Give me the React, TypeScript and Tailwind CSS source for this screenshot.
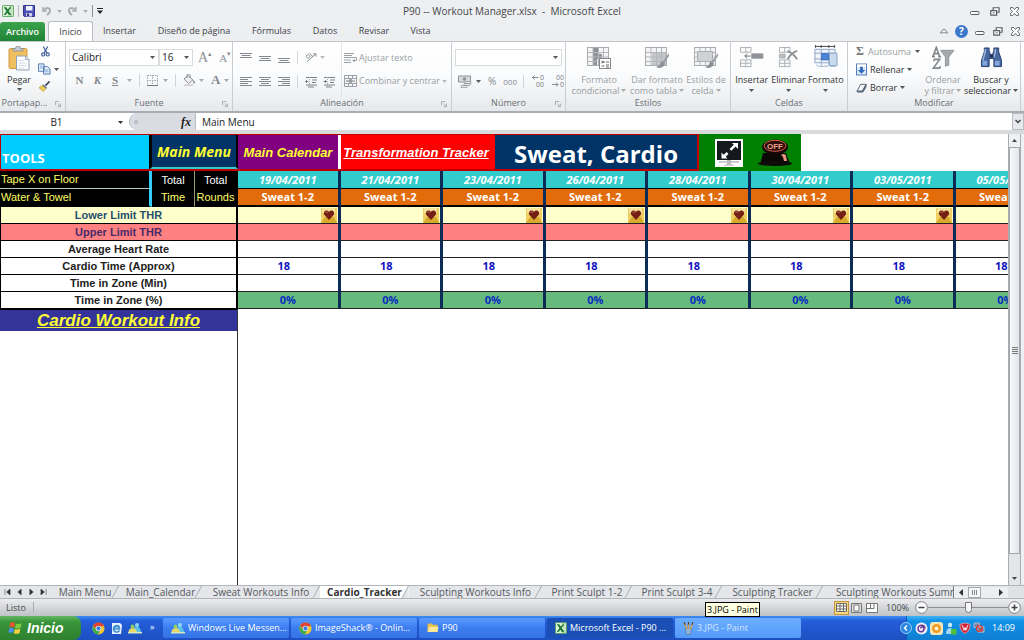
import type { ReactNode } from "react";
import { clsx } from "clsx";

const UI = "font-['Open_Sans','Noto_Sans',sans-serif]";
const ARIAL = "font-['Liberation_Sans',Arial,sans-serif]";

const MENU_TABS = [
  { label: "Inicio", width: "w-[45px]" },
  { label: "Insertar", width: "w-[53px]" },
  { label: "Diseño de página", width: "w-[96px]" },
  { label: "Fórmulas", width: "w-[59px]" },
  { label: "Datos", width: "w-[48px]" },
  { label: "Revisar", width: "w-[50px]" },
  { label: "Vista", width: "w-[43px]" },
];

const DATES = [
  "19/04/2011",
  "21/04/2011",
  "23/04/2011",
  "26/04/2011",
  "28/04/2011",
  "30/04/2011",
  "03/05/2011",
  "05/05/2011",
];

const SHEETS = [
  { label: "Main Menu", width: "w-[68px]" },
  { label: "Main_Calendar", width: "w-[83px]" },
  { label: "Sweat Workouts Info", width: "w-[118px]" },
  { label: "Cardio_Tracker", width: "w-[89px]", active: true },
  { label: "Sculpting Workouts Info", width: "w-[133px]" },
  { label: "Print Sculpt 1-2", width: "w-[90px]" },
  { label: "Print Sculpt 3-4", width: "w-[90px]" },
  { label: "Sculpting Tracker", width: "w-[101px]" },
];

function Caret({ className }: { className?: string }) {
  return (
    <svg viewBox="0 0 5 3" className={clsx("h-[3px] w-[5px] shrink-0", className ?? "text-[#555]")}>
      <path d="M0 0h5L2.5 3z" fill="currentColor" />
    </svg>
  );
}

function ExcelIcon({ className }: { className: string }) {
  return (
    <svg viewBox="0 0 14 14" className={className}>
      <rect x="0.5" y="0.5" width="13" height="13" rx="1" fill="#dff0da" stroke="#4c9a52" />
      <path d="M8 2h4.5M9 4.5h3.5M9 7h3.5M9 9.5h3.5M8 12h4.5" stroke="#9ccc97" />
      <path d="M2 2.5h3l1.7 2.8L9 2.5h2L7.7 7l3.3 4.8H8L6.300 8.900 4.200 11.800H2L5.200 7z" fill="#1c7a34" />
    </svg>
  );
}

function ChromeIcon() {
  return (
    <svg viewBox="0 0 14 14" className="size-[13px] shrink-0">
      <circle cx="7" cy="7" r="6.500" fill="#f4c430" />
      <path d="M1.200 4.200A6.500 6.500 0 0 1 13 4.500H7L4.500 7z" fill="#e0402f" />
      <path d="M1.200 4.200A6.500 6.500 0 0 0 6.500 13.500L9 8.500 5 8.500z" fill="#3faa4b" />
      <circle cx="7" cy="7" r="3" fill="#fff" />
      <circle cx="7" cy="7" r="2.300" fill="#3d7de0" />
    </svg>
  );
}

function MessengerIcon() {
  return (
    <svg viewBox="0 0 14 12" className="h-[12px] w-[14px] shrink-0">
      <path d="M6 7c0-2 1.500-2.500 3-2.500S12.500 6 13.500 11H6z" fill="#5cc0e8" />
      <circle cx="9" cy="3" r="2" fill="#8fd8f4" />
      <path d="M0.500 10c.5-3 2-4 4-4s3.500 1 4.500 4z" fill="#e9d76a" />
      <circle cx="4.500" cy="4.500" r="1.900" fill="#8fd05a" />
      <path d="M0 10h14v1.500H0z" fill="#d8e9c0" />
    </svg>
  );
}

function PaintIcon() {
  return (
    <svg viewBox="0 0 12 14" className="h-[13px] w-[11px] shrink-0">
      <path d="M2.500 7h7l-1 6.500h-5z" fill="#8fb3d8" stroke="#4a6a93" strokeWidth=".6" />
      <path d="M4 7.500L1.500 1M6 7.500V1M8 7.500L10.500 1.500" stroke="#d8a348" strokeWidth="1.500" />
      <path d="M1 0l1.500 3M6 0v2.500M11 0L9.500 3" stroke="#5a3a20" strokeWidth="1.200" />
    </svg>
  );
}

function WindowControls({ className }: { className: string }) {
  return (
    <div className={clsx("flex items-center text-[#555b63]", className)}>
      <button aria-label="Minimizar">
        <svg viewBox="0 0 10 4" className="mt-1 h-[4px] w-[10px]" fill="#fff" stroke="currentColor">
          <rect x=".5" y=".5" width="8.500" height="3" rx="1" />
        </svg>
      </button>
      <button aria-label="Restaurar">
        <svg viewBox="0 0 11 10" className="h-[9px] w-[10px]" fill="#fff" stroke="currentColor">
          <path d="M3.500 .8h6.500v5H3.500z" strokeWidth="1.300" />
          <path d="M.8 4h6.500v5H.8z" strokeWidth="1.300" />
          <path d="M2.800 6.500h2.500" />
        </svg>
      </button>
      <button aria-label="Cerrar">
        <svg viewBox="0 0 10 10" className="size-[9px]" fill="#fff" stroke="currentColor">
          <path d="M.6.6h2.600L5 2.800 6.800.6h2.600v2L7.300 5l2.100 2.400v2H6.800L5 7.200 3.200 9.400H.6v-2L2.700 5 .6 2.600z" />
        </svg>
      </button>
    </div>
  );
}

function TitleBar() {
  return (
    <header className="relative flex h-[22px] shrink-0 items-center justify-between pr-[5px] pl-[2px]">
      <div className="flex h-[17px] items-center">
        <ExcelIcon className="size-[12px]" />
        <span className="mx-1 h-3 w-px bg-[#b9bdc3]" />
        <button aria-label="Guardar">
          <svg viewBox="0 0 12 12" className="size-[12px]">
            <path d="M.5.5h11v11h-10l-1-1z" fill="#4d50b8" stroke="#34368c" />
            <path d="M3 1h6.500v4.500H3z" fill="#f1f3ff" />
            <path d="M3 8h6v3.500H3z" fill="#c9cdea" />
            <path d="M4 8.500h2v2.500H4z" fill="#34368c" />
          </svg>
        </button>
        <button aria-label="Deshacer" className="ml-[6px] flex items-center gap-[5px] text-[#a9adb3]">
          <svg viewBox="0 0 11 10" className="h-[10px] w-[11px]" fill="none" stroke="currentColor" strokeWidth="2">
            <path d="M2 1v4h4" strokeWidth="1.500" />
            <path d="M2.500 4.500C5 1 9.500 1.500 9 5c-.3 2-1.500 3-3 4" />
          </svg>
          <Caret className="text-[#a9adb3]" />
        </button>
        <button aria-label="Rehacer" className="ml-[5px] flex items-center gap-[5px] text-[#a9adb3]">
          <svg viewBox="0 0 11 10" className="h-[10px] w-[11px]" fill="none" stroke="currentColor" strokeWidth="2">
            <path d="M9 1v4H5" strokeWidth="1.500" />
            <path d="M8.500 4.500C6 1 1.500 1.500 2 5c.3 2 1.500 3 3 4" />
          </svg>
          <Caret className="text-[#a9adb3]" />
        </button>
        <span className="mx-1 h-3 w-px bg-[#8b9097]" />
        <button aria-label="Personalizar barra">
          <svg viewBox="0 0 6 6" className="size-[6px]">
            <path d="M0 .5h6" stroke="#222" />
            <path d="M0 2.500h6L3 6z" fill="#222" />
          </svg>
        </button>
      </div>
      <h1 className="absolute inset-x-0 text-center text-[10px] leading-[14px] whitespace-pre text-[#44474c]">
        P90 -- Workout Manager.xlsx  -  Microsoft Excel
      </h1>
      <WindowControls className="gap-[10px]" />
    </header>
  );
}

function MenuBar() {
  return (
    <nav className="flex h-[20px] shrink-0 items-end border-b border-[#c3c7cc] text-[9px] leading-[18px] text-[#3d4147]">
      <button className="h-[19px] w-[45px] rounded-t-[3px] bg-linear-to-b from-[#3ba44b] to-[#1f8236] font-semibold text-white">
        Archivo
      </button>
      <div className="ml-[3px] flex">
        {MENU_TABS.map((tab, i) => (
          <button
            key={tab.label}
            className={clsx(
              "h-[20px] whitespace-nowrap",
              tab.width,
              i === 0 && "-mb-px rounded-t-[3px] border border-b-0 border-[#b9bdc3] bg-white",
            )}
          >
            {tab.label}
          </button>
        ))}
      </div>
      <div className="ml-auto flex h-[20px] items-center gap-[7px] pr-[4px]">
        <button aria-label="Minimizar la cinta">
          <svg viewBox="0 0 9 6" className="h-[6px] w-[8px]" fill="#fff" stroke="#666">
            <path d="M.8 5.200V4L4.500.8 8.200 4v1.200H6L4.500 4 3 5.200z" />
          </svg>
        </button>
        <button
          aria-label="Ayuda"
          className="size-[13px] rounded-full bg-[#3b78cc] text-[10px] leading-[13px] font-bold text-white"
        >
          ?
        </button>
        <WindowControls className="gap-[8px]" />
      </div>
    </nav>
  );
}

function Group({
  label,
  className,
  launcher,
  children,
}: {
  label: string;
  className: string;
  launcher?: boolean;
  children: ReactNode;
}) {
  return (
    <section className={clsx("flex h-full shrink-0 flex-col border-r border-[#c9ccd1]", className)}>
      <div className="flex h-[55px] min-w-0">{children}</div>
      <div className="relative h-[12px] text-center text-[9px] leading-[12px] text-[#6a6e74]">
        {label}
        {launcher && (
          <svg viewBox="0 0 7 7" className="absolute right-[4px] bottom-[2px] size-[6px]" fill="none" stroke="#a0a4aa">
            <path d="M.5 5V.5H5M3 3l3 3M6.500 3v3.500H3" />
          </svg>
        )}
      </div>
    </section>
  );
}

function Divider() {
  return <span className="h-[13px] w-px bg-[#d2d5d9]" />;
}

function Combo({ label, value, className }: { label: string; value: string; className: string }) {
  return (
    <div className={clsx("relative h-[17px]", className)}>
      <select
        aria-label={label}
        className="block h-full w-full appearance-none border border-[#d9dcdf] bg-white pl-[2px] text-[10px] leading-[15px] text-[#222]"
      >
        <option>{value}</option>
      </select>
      <Caret className="pointer-events-none absolute top-[7px] right-[4px] text-[#555]" />
    </div>
  );
}

function Clipboard() {
  return (
    <Group label="Portapap..." className="w-[66px] [&>div:last-child]:pr-[16px]" launcher>
      <button className="flex w-[38px] flex-col items-center pt-[4px] text-[9px] leading-[12px] text-[#333]">
        <svg viewBox="0 0 22 25" className="h-[25px] w-[22px]">
          <rect x="1" y="2.500" width="18" height="20" rx="1.500" fill="#f0c060" stroke="#cf9a3c" />
          <path d="M5 5V2.500h2.500a2.500 2.500 0 0 1 5 0H15V5z" fill="#c5c9cf" stroke="#84898f" strokeWidth=".8" />
          <path d="M8.500 10h9l3.500 3.500V24H8.500z" fill="#fff" stroke="#8aa0bd" />
          <path d="M17.500 10v3.500H21" fill="#dde6f0" stroke="#8aa0bd" strokeWidth=".8" />
          <path d="M10.500 14.500h6M10.500 17h8M10.500 19.500h8M10.500 22h6" stroke="#c4d0df" strokeWidth=".8" />
        </svg>
        <span className="mt-[3px] mb-[2px]">Pegar</span>
        <Caret />
      </button>
      <div className="flex flex-col gap-[6px] pt-[4px]">
        <button aria-label="Cortar" className="ml-[3px]">
          <svg viewBox="0 0 10 12" className="h-[11px] w-[9px]" fill="none" stroke="#3c5c96" strokeWidth="1.300">
            <path d="M2.500.5L6.500 7.500M7.500.5L3.500 7.500" />
            <circle cx="2.500" cy="9.300" r="1.700" />
            <circle cx="7.500" cy="9.300" r="1.700" />
          </svg>
        </button>
        <button aria-label="Copiar" className="flex items-center gap-[3px]">
          <svg viewBox="0 0 14 12" className="h-[12px] w-[13px]" fill="#e9f1fc" stroke="#4c74ad">
            <path d="M.5.5h6v8h-6zM6 3.500h4.500l2.500 2.500v5.500H6z" />
            <path d="M2 3h3M2 5h3M7.500 7h4M7.500 9h4" stroke="#7fa3d4" />
          </svg>
          <Caret />
        </button>
        <button aria-label="Copiar formato">
          <svg viewBox="0 0 13 12" className="h-[11px] w-[13px]">
            <path d="M12 .5L7.500 5" stroke="#3f4a66" strokeWidth="2" />
            <path d="M5 3.500l4.500 4-1.500 1-4-3.500z" fill="#6c7688" />
            <path d="M3.800 4.800L.5 7.500c1.500.5 2.500 2 4.500 4L8 8.500z" fill="#f1cd55" stroke="#b08c2c" strokeWidth=".6" />
          </svg>
        </button>
      </div>
    </Group>
  );
}

function FontGroup() {
  return (
    <Group label="Fuente" className="w-[167px]" launcher>
      <div className="flex flex-col pt-[7px] pl-[3px]">
        <div className="flex items-center">
          <Combo label="Fuente" value="Calibri" className="w-[90px]" />
          <Combo label="Tamaño" value="16" className="w-[34px]" />
          <div className="ml-[5px] flex items-end gap-[7px] font-['Liberation_Serif',serif] leading-[14px] text-[#8c9096]">
            <button aria-label="Aumentar tamaño" className="flex items-start text-[14px]">
              A<span className="text-[7px] leading-[7px]">▴</span>
            </button>
            <button aria-label="Disminuir tamaño" className="flex items-start text-[11px]">
              A<span className="text-[7px] leading-[7px]">▾</span>
            </button>
          </div>
        </div>
        <div className="mt-[7px] flex items-center gap-[7px] pl-[5px] font-['Liberation_Serif',serif] text-[11px] leading-[14px] text-[#85898f]">
          <button className="w-[11px] font-bold">N</button>
          <button className="w-[11px] font-bold italic">K</button>
          <button className="w-[10px] font-bold underline">S</button>
          <Caret className="text-[#aaa]" />
          <Divider />
          <button aria-label="Bordes" className="flex items-center gap-[5px]">
            <svg viewBox="0 0 11 11" className="size-[11px]" fill="none" stroke="#a4a8ad">
              <path d="M.5.5h10v10M5.500 0v11M0 5.500h11M.5 0v11" strokeDasharray="1.500 1" />
              <path d="M0 10.500h11" stroke="#777" />
            </svg>
            <Caret className="text-[#aaa]" />
          </button>
          <Divider />
          <button aria-label="Color de relleno" className="flex items-center gap-[3px]">
            <svg viewBox="0 0 13 12" className="h-[12px] w-[13px]">
              <path d="M5 1.500L10 6 5.500 9.500 1 5z" fill="#eee" stroke="#8d9197" />
              <path d="M4 4V1.500a1.500 1.500 0 0 1 3 0V4" fill="none" stroke="#8d9197" />
              <path d="M10.500 6c1.500 1.500 2 2.500 1 3.500s-1.800-.8-1-3.500z" fill="#8d9197" />
              <path d="M1 10.500h9v1.500H1z" fill="#ccc" />
            </svg>
            <Caret className="text-[#aaa]" />
          </button>
          <button aria-label="Color de fuente" className="flex items-center gap-[4px] text-[13px] font-bold">
            A
            <Caret className="text-[#aaa]" />
          </button>
        </div>
      </div>
    </Group>
  );
}

function LinesIcon({ d }: { d: string }) {
  return (
    <svg viewBox="0 0 12 12" className="size-[12px]" stroke="#85898f">
      <path d={d} />
    </svg>
  );
}

function IndentIcon({ flip }: { flip?: boolean }) {
  return (
    <svg viewBox="0 0 13 12" className="h-[12px] w-[13px]" fill="none" stroke="#7d8187">
      <path d="M1 1.500h11M7 4h5M7 6.500h4M1 9h11M3 11h6" />
      <path d="M4.500 1v10" stroke="#aaa" strokeDasharray="1 1" />
      <path d={flip ? "M.5 5.500h3M2 4l1.500 1.500L2 7" : "M3.500 5.500h-3M2 4L.5 5.500 2 7"} />
    </svg>
  );
}

function Alignment() {
  return (
    <Group label="Alineación" className="w-[219px]" launcher>
      <div className="flex w-[109px] flex-col gap-[11px] border-r border-[#e1e3e6] pt-[9px] pl-[7px]">
        <div className="flex items-center gap-[7px]">
          <button aria-label="Alinear arriba"><LinesIcon d="M0 1.500h12M1.500 3.500h9M0 5.500h12" /></button>
          <button aria-label="Alinear en medio"><LinesIcon d="M0 4.500h12M1.500 6.500h9M0 8.500h12" /></button>
          <button aria-label="Alinear abajo"><LinesIcon d="M0 6.500h12M1.500 8.500h9M0 10.500h12" /></button>
          <Divider />
          <button aria-label="Orientación" className="flex items-center gap-[3px]">
            <svg viewBox="0 0 13 12" className="h-[11px] w-[12px]" fill="none" stroke="#8b8f95">
              <path d="M2 10.500L12 2M9 1.800h3V5" />
              <path d="M1 4.500l2.500-2 2 2.500-2.500 2zM5 1l3 4 2-1.500" />
            </svg>
            <Caret className="text-[#bbb]" />
          </button>
        </div>
        <div className="flex items-center gap-[7px]">
          <button aria-label="Izquierda"><LinesIcon d="M0 1.500h12M0 3.500h8M0 5.500h12M0 7.500h8M0 9.500h12" /></button>
          <button aria-label="Centro"><LinesIcon d="M0 1.500h12M2 3.500h8M0 5.500h12M2 7.500h8M0 9.500h12" /></button>
          <button aria-label="Derecha"><LinesIcon d="M0 1.500h12M4 3.500h8M0 5.500h12M4 7.500h8M0 9.500h12" /></button>
          <Divider />
          <div className="flex gap-[5px]">
            <button aria-label="Disminuir sangría"><IndentIcon /></button>
            <button aria-label="Aumentar sangría"><IndentIcon flip /></button>
          </div>
        </div>
      </div>
      <div className="flex flex-col gap-[11px] pt-[10px] pl-[2px] text-[9px] leading-[12px] text-[#9a9da2]">
        <button className="flex items-center gap-[2px] whitespace-nowrap">
          <svg viewBox="0 0 13 12" className="h-[12px] w-[13px]" fill="none" stroke="#9ca0a5">
            <path d="M0 1.500h10M0 3.500h8M0 5.500h12.500v3H9M0 8h7M0 10.500h7" />
            <path d="M10.500 7L9 8.500l1.500 1.500" />
          </svg>
          Ajustar texto
        </button>
        <button className="flex items-center gap-[2px] whitespace-nowrap">
          <svg viewBox="0 0 13 12" className="h-[12px] w-[13px]" fill="none" stroke="#9ca0a5">
            <path d="M.5.5h12v11H.5zM.5 3.500h12M.5 8.500h12M4.500.5v3M8.500.5v3M4.500 8.500v3M8.500 8.500v3" />
            <path d="M2 6h3M11 6H8" stroke="#777" />
            <path d="M5.500 4.500h2v3h-2z" fill="#999" />
          </svg>
          Combinar y centrar
          <Caret className="text-[#bbb]" />
        </button>
      </div>
    </Group>
  );
}

function DecimalIcon({ top, bottom, arrow }: { top: string; bottom: string; arrow: string }) {
  return (
    <svg viewBox="0 0 13 14" className="h-[14px] w-[13px]" fill="none" stroke="#85898f">
      <path d={arrow} />
      <text x="13" y="6" textAnchor="end" fontSize="7" fill="#777b81" stroke="none">
        {top}
      </text>
      <text x="13" y="13" textAnchor="end" fontSize="7" fill="#777b81" stroke="none">
        {bottom}
      </text>
    </svg>
  );
}

function NumberGroup() {
  return (
    <Group label="Número" className="w-[114px]" launcher>
      <div className="flex flex-col pt-[7px] pl-[3px]">
        <Combo label="Formato de número" value="" className="w-[107px]" />
        <div className="mt-[8px] flex items-center gap-[7px] pl-[3px] text-[9px] leading-[13px] text-[#85898f]">
          <button aria-label="Moneda" className="flex items-center gap-[4px]">
            <svg viewBox="0 0 14 13" className="h-[13px] w-[14px]">
              <path d="M.5 1h12v6H.5z" fill="#d8dadd" stroke="#8e9298" />
              <circle cx="6.500" cy="4" r="1.800" fill="#8e9298" />
              <path d="M7 6.500h6v2H7zM6 8.500h6v2H6zM3 10.500h6v2H3z" fill="#ececee" stroke="#8e9298" strokeWidth=".7" />
            </svg>
            <Caret />
          </button>
          <button className="text-[10px]">%</button>
          <button className="-mr-px text-[8px]">000</button>
          <Divider />
          <button aria-label="Aumentar decimales">
            <DecimalIcon top="0" bottom="00" arrow="M7.500 3.500h-6M3.500 1.500l-2 2 2 2" />
          </button>
          <button aria-label="Disminuir decimales">
            <DecimalIcon top="00" bottom="0" arrow="M1 10.500h6M5 8.500l2 2-2 2" />
          </button>
        </div>
      </div>
    </Group>
  );
}

function BigButton({
  icon,
  lines,
  className,
  disabled,
}: {
  icon: ReactNode;
  lines: string[];
  className: string;
  disabled?: boolean;
}) {
  return (
    <button
      className={clsx(
        "flex flex-col items-center pt-[3px] text-[9px] leading-[11px] whitespace-nowrap",
        disabled ? "text-[#9a9da2]" : "text-[#333]",
        className,
      )}
    >
      <span className="mb-[4px] flex h-[25px] items-center">{icon}</span>
      <span>{lines[0]}</span>
      <span className="flex h-[11px] items-center gap-[2px]">
        {lines[1]}
        <Caret className={disabled ? "text-[#aaa]" : "text-[#555]"} />
      </span>
    </button>
  );
}

function TableIcon({ kind }: { kind: "conditional" | "brush" | "cell" }) {
  return (
    <svg viewBox="0 0 26 25" className="h-[25px] w-[26px]">
      <rect x="1.500" y="2.500" width="21" height="18" fill="#f4f4f5" stroke="#a9acb0" />
      {kind === "conditional" && <path d="M7 3h6v6H7zM7 9h9v5H7zM7 14h4v6H7z" fill="#8f9297" />}
      {kind === "brush" && <path d="M8 7h14v13H8z" fill="#c3c5c9" />}
      <path d="M2 7.500h20M2 12h20M2 16.500h20M7 3v17M12.500 3v17M17.500 3v17" stroke="#b4b7bb" />
      {kind === "cell" && <path d="M4.500 6.500h15v10h-15z" fill="#cfd1d4" stroke="#a9acb0" />}
      {kind === "conditional" ? (
        <>
          <rect x="13.500" y="13.500" width="11" height="10" fill="#fff" stroke="#85888d" />
          <path d="M15.500 16l3 1-3 1M20 17h3M15.500 21h3M20 20h3M20 22h3" fill="none" stroke="#666" />
        </>
      ) : (
        <>
          <path d="M25 8l-6.500 9 1.500 1L25 11z" fill="#999ca1" />
          <path d="M18.500 16.500c-2 0-2 2-3 3.500-1 1-2 1.500-3.500 2 4 2 8 .5 9-3.500z" fill="#8d9095" />
        </>
      )}
    </svg>
  );
}

function Styles() {
  return (
    <Group label="Estilos" className="w-[165px]">
      <BigButton disabled className="w-[66px]" icon={<TableIcon kind="conditional" />} lines={["Formato", "condicional"]} />
      <BigButton disabled className="w-[50px]" icon={<TableIcon kind="brush" />} lines={["Dar formato", "como tabla"]} />
      <BigButton disabled className="w-[48px]" icon={<TableIcon kind="cell" />} lines={["Estilos de", "celda"]} />
    </Group>
  );
}

function Cells() {
  return (
    <Group label="Celdas" className="w-[117px]">
      <BigButton
        className="w-[42px]"
        lines={["Insertar"]}
        icon={
          <svg viewBox="0 0 26 24" className="h-[23px] w-[25px]" fill="#fbfbfb" stroke="#aaadb2">
            <path d="M1.500 1.500h11v5h-11zM7 1.500v5M1.500 14.500h11v7h-11zM7 14.500v7M1.500 18h11" />
            <path d="M13 8h12v5H13z" fill="#8e9196" />
            <path d="M12 10.500H6M8.500 8L6 10.500 8.500 13" fill="none" stroke="#666" />
          </svg>
        }
      />
      <BigButton
        className="w-[32px]"
        lines={["Eliminar"]}
        icon={
          <svg viewBox="0 0 24 24" className="h-[23px] w-[23px]" fill="#fbfbfb" stroke="#aaadb2">
            <path d="M2.500 1.500h11v5h-11zM8 1.500v5M2.500 14.500h11v7h-11zM8 14.500v7M2.500 18h11" />
            <path d="M2.500 8.500h6v4h-6z" fill="#bbb" />
            <path d="M11 5c4 2 8 5 10 9M21 5c-4 1.500-8 5-10 9" fill="none" stroke="#8e9196" strokeWidth="2" />
          </svg>
        }
      />
      <BigButton
        className="w-[43px]"
        lines={["Formato"]}
        icon={
          <svg viewBox="0 0 26 26" className="h-[25px] w-[26px]" fill="#f1f5fb" stroke="#8ba4c6">
            <path d="M1.500 4.500h21v14h-21zM1.500 8.500h21M1.500 14.500h21M8 4.500v17M16 4.500v17" />
            <path d="M16.500 8.500h8v13h-8z" fill="#c9d9ee" />
            <path d="M8.500 9h7v6.500h-7z" fill="#4b86da" stroke="#3b6fb8" />
            <path d="M3 20.500c4 4 8 0 12 2M17 22h6" fill="none" />
            <path d="M2 1.500h20M2 0v3M8 0v3M16 0v3M22 0v3" stroke="#444" />
          </svg>
        }
      />
    </Group>
  );
}

function Editing() {
  return (
    <Group label="Modificar" className="w-[173px]">
      <div className="flex w-[72px] flex-col gap-[5px] pt-[3px] pl-[8px] text-[9px] leading-[13px] text-[#333]">
        <button className="flex items-center gap-[4px] text-[#9a9da2]">
          <span className="w-[10px] font-['Liberation_Serif',serif] text-[12px] font-bold text-[#777]">Σ</span>
          Autosuma
          <Caret />
        </button>
        <button className="flex items-center gap-[3px]">
          <svg viewBox="0 0 12 13" className="h-[13px] w-[11px]">
            <rect x=".5" y=".5" width="11" height="12" fill="#dbe8f8" stroke="#4b73ae" />
            <path d="M1 1h10v3H1z" fill="#fff" />
            <path d="M4.500 3.500h3V7H10l-4 4-4-4h2.500z" fill="#2f66bd" />
          </svg>
          Rellenar
          <Caret />
        </button>
        <button className="flex items-center gap-[3px]">
          <svg viewBox="0 0 12 11" className="h-[10px] w-[11px]" stroke="#555f72">
            <path d="M5 1.500h6L7 9H1z" fill="#f6f8fc" />
            <path d="M11 1.500v3L7.500 10H1.500L1 9h6z" fill="#6c7b94" />
          </svg>
          Borrar
          <Caret />
        </button>
      </div>
      <BigButton
        disabled
        className="w-[46px]"
        lines={["Ordenar", "y filtrar"]}
        icon={
          <svg viewBox="0 0 26 25" className="h-[24px] w-[25px]" fill="none" stroke="#83868b" strokeWidth="1.700">
            <path d="M10 4.500h14l-5.500 7V20l-3.500 1v-9.500z" fill="#a6a9ad" stroke="#929599" strokeWidth="1" />
            <path d="M2 11L5.500 1.500 9 11M3.500 8h4M1 11h3M7.500 11h3" />
            <path d="M3 14h6L2.500 23H9.500M3 14v2M9.500 21v2" />
          </svg>
        }
      />
      <BigButton
        className="w-[50px]"
        lines={["Buscar y", "seleccionar"]}
        icon={
          <svg viewBox="0 0 24 22" className="h-[21px] w-[23px]">
            <path d="M4.500 1h5v3l1.500 4h2l1.500-4V1h5v4l3 9v6.500h-8V12h-5v8.500h-8V14l3-9z" fill="#47679f" stroke="#263f70" />
            <path d="M5.500 2v3L3 14M16 2v3l-1.500 6" fill="none" stroke="#9db9e4" strokeWidth="1.500" />
            <path d="M2.500 14.500h5v5h-5zM15.500 14.500h5v5h-5z" fill="#85a7dc" />
            <path d="M10 8h4v3h-4z" fill="#1f3158" />
          </svg>
        }
      />
    </Group>
  );
}

function FormulaBar() {
  return (
    <div className="flex h-[23px] shrink-0 items-center border-t-2 border-b-4 border-t-[#a9adb3] border-b-[#d9dadc] bg-white text-[10px] text-[#222]">
      <div className="relative w-[129px]">
        <input aria-label="Cuadro de nombres" defaultValue="B1" className="block h-[16px] w-full pr-[16px] text-center leading-[16px]" />
        <Caret className="absolute top-[7px] right-[6px] text-[#333]" />
      </div>
      <div className="flex h-full w-[67px] items-center justify-between rounded-l-full border-r border-l border-[#b9bdc3] bg-[#d9dde3] pr-[4px] pl-[4px]">
        <span className="size-[4px] rounded-full border border-[#a9adb3]" />
        <button className="font-['Liberation_Serif',serif] text-[12px] leading-[14px] font-bold italic">fx</button>
      </div>
      <input aria-label="Barra de fórmulas" defaultValue="Main Menu" className="h-full min-w-0 flex-1 pl-[6px] leading-[16px]" />
      <button aria-label="Expandir" className="flex h-full w-[12px] items-center justify-center border border-[#b9bdc3] bg-[#e6e8eb]">
        <svg viewBox="0 0 6 5" className="h-[5px] w-[6px]" fill="none" stroke="#444" strokeWidth="1.500">
          <path d="M.5 1L3 3.500 5.500 1" />
        </svg>
      </button>
    </div>
  );
}

function HeartIcon() {
  return (
    <svg viewBox="0 0 16 15" className="h-[15px] w-[16px]">
      <rect width="16" height="15" fill="#f0cf62" />
      <path d="M0 15L4 9h9l3 6z" fill="#d9a92e" />
      <path d="M1 0h13v5H1z" fill="#f8e49a" />
      <path d="M8 12L3 6.500C2 3 5.500.8 8 3.800c2.500-3 6-.8 5 2.700z" fill="#742016" />
      <path d="M4.500 4.500c.8-1 2-.6 2.500.4" fill="none" stroke="#c8765c" />
    </svg>
  );
}

function SheetHeader() {
  return (
    <div className="flex h-[37px] w-[801px] text-center leading-[18px] whitespace-nowrap">
      <div className="flex w-[699px] border-y border-b-2 border-[#c00000]">
        <div className="w-[150px] border-r border-l border-black border-l-[#c00000] bg-[#00ccff] pt-[14px] pl-px text-left text-[13px] font-bold text-white">
          TOOLS
        </div>
        <a
          href="#main-menu"
          className="w-[88px] border-x-2 border-b-2 border-x-black border-b-[#33cccc] bg-[#003366] pt-[8px] text-[14px] font-bold text-[#ffff33] italic"
        >
          Main Menu
        </a>
        <a
          href="#main-calendar"
          className={clsx("w-[103px] border-r-3 border-white bg-[#800080] pt-[9px] text-[13px] font-bold text-[#ffff33] italic", ARIAL)}
        >
          Main Calendar
        </a>
        <a
          href="#transformation-tracker"
          className={clsx("w-[154px] bg-[#ff0000] pt-[9px] pr-[4px] text-[13px] font-bold text-white italic underline", ARIAL)}
        >
          Transformation Tracker
        </a>
        <div className="flex-1 border-r-2 border-[#c00000] bg-[#003366] text-[24px] leading-[37px] font-bold text-white">
          Sweat, Cardio
        </div>
      </div>
      <div className="flex flex-1 items-center justify-end gap-[14px] bg-[#008000] pr-[8px]">
        <button aria-label="Pantalla completa">
          <svg viewBox="0 0 28 28" className="size-[28px]">
            <rect width="28" height="28" fill="#fff" />
            <path d="M2 2h24v19H2z" fill="#15181c" />
            <path d="M4 22.500h20v1H4zM8 26.500c1-1.500 11-1.500 12 0z" fill="#999" />
            <path d="M12 21h4v4.500h-4z" fill="#bbb" />
            <path d="M23 4h-6l1.800 1.800-4.300 4.200 1.800 1.800 4.300-4.200L23 10zM6.500 19.500h6l-1.800-1.800 2.800-2.800-1.800-1.800-3 2.700L6.500 13.500z" fill="#fff" />
          </svg>
        </button>
        <button aria-label="Apagar">
          <svg viewBox="0 0 36 28" className="h-[28px] w-[36px]">
            <path d="M6 14h23l3.500 10h-29z" fill="#0c0806" />
            <ellipse cx="18" cy="24.500" rx="17" ry="2.500" fill="#100c0a" />
            <ellipse cx="18" cy="8" rx="13" ry="7.500" fill="#160806" />
            <ellipse cx="18" cy="6.800" rx="11" ry="5.500" fill="#2c0d09" stroke="#d8604a" />
            <text x="18" y="9.500" textAnchor="middle" fontSize="8" fontWeight="700" fill="#f3a18c" fontFamily="Liberation Sans">
              OFF
            </text>
            <path d="M24 16c2-2 5-1 5 1l1 5h-3l-1-4z" fill="#e8957c" />
          </svg>
        </button>
      </div>
    </div>
  );
}

function DataRow({
  label,
  labelClass,
  cellClass,
  render,
}: {
  label: string;
  labelClass?: string;
  cellClass?: string;
  render?: () => ReactNode;
}) {
  return (
    <tr className="h-[17px]">
      <th
        colSpan={3}
        className={clsx(
          "border-r-2 border-b border-l border-black p-0 text-[11px] leading-[16px] font-bold",
          ARIAL,
          labelClass ?? "text-[#222]",
        )}
      >
        {label}
      </th>
      {DATES.map((date) => (
        <td
          key={date}
          className={clsx("border-r-3 border-b border-r-[#0b2c56] border-b-[#222] text-[11px] leading-[16px] font-bold", cellClass ?? "p-0")}
        >
          {render?.()}
        </td>
      ))}
    </tr>
  );
}

function Tracker() {
  return (
    <table className="w-[1058px] table-fixed border-separate border-spacing-0 text-center whitespace-nowrap">
      <colgroup>
        <col className="w-[152px]" />
        <col className="w-[43px]" />
        <col className="w-[43px]" />
        {DATES.map((date) => (
          <col key={date} />
        ))}
      </colgroup>
      <thead className="text-[11px] leading-[17px]">
        <tr className={clsx("h-[18px] text-[#ffff66]", ARIAL)}>
          <th className="border-r-3 border-b border-r-[#33ccff] border-b-[#a8c8c8] bg-black p-0 pl-px text-left font-normal">
            Tape X on Floor
          </th>
          <th className="border-r border-[#999966] bg-black p-0 font-normal text-white">Total</th>
          <th className="border-r-2 border-black bg-black p-0 font-normal text-white">Total</th>
          {DATES.map((date) => (
            <th
              key={date}
              className={clsx("border-r-3 border-b border-r-[#0b2c56] border-b-black bg-[#33cccc] p-0 font-bold text-white italic", UI)}
            >
              {date}
            </th>
          ))}
        </tr>
        <tr className={clsx("h-[18px] text-[#ffff66]", ARIAL)}>
          <th className="border-r-3 border-b border-r-[#33ccff] border-b-black bg-black p-0 pl-px text-left font-normal">
            Water &amp; Towel
          </th>
          <th className="border-r border-b border-r-[#999966] border-b-black bg-black p-0 font-normal">Time</th>
          <th className="border-r-2 border-b border-black bg-black p-0 font-normal">Rounds</th>
          {DATES.map((date) => (
            <th
              key={date}
              className={clsx("border-r-3 border-b-2 border-r-[#0b2c56] border-b-black bg-[#e26b0a] p-0 leading-[16px] font-bold text-white", UI)}
            >
              Sweat 1-2
            </th>
          ))}
        </tr>
      </thead>
      <tbody>
        <DataRow
          label="Lower Limit THR"
          labelClass="bg-[#ffffcc] text-[#24506e]"
          cellClass="bg-[#ffffcc] p-0"
          render={() => (
            <div className="flex h-[16px] items-center justify-end pr-px">
              <HeartIcon />
            </div>
          )}
        />
        <DataRow label="Upper Limit THR" labelClass="bg-[#ff8080] text-[#4a2a6a]" cellClass="bg-[#ff8080] p-0" />
        <DataRow label="Average Heart Rate" />
        <DataRow label="Cardio Time (Approx)" cellClass="py-0 pr-[8px] pl-0 text-[#1010c0]" render={() => "18"} />
        <DataRow label="Time in Zone (Min)" />
        <DataRow label="Time in Zone (%)" cellClass="bg-[#66bb7c] p-0 text-[#0a2cc0]" render={() => "0%"} />
      </tbody>
    </table>
  );
}

function Worksheet() {
  return (
    <div className="flex min-h-0 flex-1 bg-white">
      <main className="flex min-w-0 flex-1 flex-col overflow-hidden">
        <SheetHeader />
        <Tracker />
        <div className="w-[238px] flex-1 border-r border-[#333]">
          <h2
            className={clsx(
              "h-[22px] border-t border-black bg-[#333399] text-center text-[17px] leading-[21px] font-bold text-[#ffff33] italic underline",
              ARIAL,
            )}
          >
            Cardio Workout Info
          </h2>
        </div>
      </main>
      <div className="flex w-[16px] shrink-0 bg-[#eef0f3] pr-[3px]">
        <div className="flex flex-1 flex-col border-x border-[#a9adb3] bg-[#e3e5e9]">
          <button aria-label="Subir" className="flex h-[13px] items-center justify-center bg-[#eff0f2]">
            <Caret className="rotate-180 text-[#444]" />
          </button>
          <div className="mb-[18px] flex flex-1 items-center justify-center border border-[#a4a8ae] bg-linear-to-r from-[#f8f9fa] to-[#e1e4e8]">
            <svg viewBox="0 0 6 7" className="h-[7px] w-[6px]" stroke="#777">
              <path d="M0 .5h6M0 2.500h6M0 4.500h6M0 6.500h6" />
            </svg>
          </div>
          <button aria-label="Bajar" className="flex h-[13px] items-center justify-center">
            <Caret className="text-[#444]" />
          </button>
        </div>
      </div>
    </div>
  );
}

function ScrollArrow({ label, d }: { label: string; d: string }) {
  return (
    <button aria-label={label}>
      <svg viewBox="0 0 4 7" className="h-[7px] w-[4px]" fill="#333">
        <path d={d} />
      </svg>
    </button>
  );
}

function SheetTabs() {
  return (
    <div className="flex h-[14px] shrink-0 items-center border-t border-b border-[#b1b4b9] bg-[#e4e6e9] text-[10px] leading-[12px] text-[#55585d]">
      <div className="flex w-[51px] items-center justify-around px-[2px]">
        {["M1 0v7M7 0L3 3.500 7 7z", "M6 0L2 3.500 6 7z", "M2 0l4 3.500L2 7z", "M7 0v7M1 0l4 3.500L1 7z"].map((d) => (
          <button key={d} aria-label="Desplazar hojas">
            <svg viewBox="0 0 8 7" className="h-[6px] w-[7px]" fill="#333" stroke="#333" strokeWidth=".6">
              <path d={d} />
            </svg>
          </button>
        ))}
      </div>
      <div className="flex min-w-0 flex-1 overflow-hidden border-r border-[#777] whitespace-nowrap">
        {SHEETS.map((sheet) => (
          <button
            key={sheet.label}
            className={clsx(
              "relative h-[12px] shrink-0",
              sheet.width,
              sheet.active && "bg-white font-bold text-[#333]",
            )}
          >
            {sheet.label}
            <svg viewBox="0 0 8 12" className="absolute top-0 right-0 h-[12px] w-[8px]" fill={sheet.active ? "#e4e6e9" : "none"} stroke="#a9acb1">
              <path d="M1 12L7.500 0V12z" stroke="none" />
              <path d="M1 12L7.500 0" />
            </svg>
          </button>
        ))}
        <button className="shrink-0 pl-[13px]">Sculpting Workouts Summary</button>
      </div>
      <div className="flex w-[54px] items-center bg-[#eceef0] pl-[5px]">
        <ScrollArrow label="Izquierda" d="M4 0v7L0 3.500z" />
        <span className="mr-[18px] ml-[5px] flex h-[11px] w-[13px] items-center justify-center gap-px border border-[#a4a8ae] bg-[#f5f6f7]">
          <i className="h-[5px] w-px bg-[#888]" />
          <i className="h-[5px] w-px bg-[#888]" />
          <i className="h-[5px] w-px bg-[#888]" />
        </span>
        <ScrollArrow label="Derecha" d="M0 0v7l4-3.500z" />
      </div>
      <div className="h-full w-[16px] bg-[#dfe1e4]" />
    </div>
  );
}

function RoundButton({ label, d }: { label: string; d: string }) {
  return (
    <button aria-label={label}>
      <svg viewBox="0 0 13 13" className="size-[13px]" fill="#fdfdfd" stroke="#7d8187">
        <circle cx="6.500" cy="6.500" r="5.800" />
        <path d={d} stroke="#444" strokeWidth="1.500" />
      </svg>
    </button>
  );
}

function StatusBar() {
  return (
    <div className="flex h-[17px] shrink-0 items-center bg-linear-to-b from-[#ebecee] to-[#bfc2c6] pr-[3px] pl-[6px] text-[9px] leading-[14px] text-[#44474c]">
      <span className="border-r border-[#a9adb3] pr-[7px] leading-[11px]">Listo</span>
      <div className="ml-auto flex items-center">
        <button aria-label="Normal" className="flex h-[14px] w-[15px] items-center justify-center border border-[#c2953a] bg-[#fbd982]">
          <svg viewBox="0 0 11 9" className="h-[9px] w-[11px]" fill="#fff" stroke="#6d6a60">
            <path d="M.5.5h10v8H.5zM4 .5v8M7.500.5v8M.5 3h10M.5 6h10" />
          </svg>
        </button>
        <button aria-label="Diseño de página" className="flex w-[15px] justify-center">
          <svg viewBox="0 0 11 10" className="h-[10px] w-[11px]" fill="#ddd" stroke="#777">
            <path d="M.5.5h10v9H.5z" />
            <path d="M3 2h5v6H3z" fill="#fff" />
          </svg>
        </button>
        <button aria-label="Salto de página" className="flex w-[16px] justify-center">
          <svg viewBox="0 0 12 10" className="h-[10px] w-[12px]" fill="#fff" stroke="#777">
            <path d="M.5.5h11v9H.5zM4.500.5v5M8 .5v5M.5 5.500H8" />
          </svg>
        </button>
        <span className="mx-[6px]">100%</span>
        <RoundButton label="Alejar" d="M3.500 6.500h6" />
        <input
          type="range"
          aria-label="Zoom"
          defaultValue={50}
          className="h-[13px] w-[80px] appearance-none bg-[linear-gradient(#8b8f95,#8b8f95)] bg-[length:100%_1px] bg-center bg-no-repeat [&::-webkit-slider-thumb]:h-[11px] [&::-webkit-slider-thumb]:w-[7px] [&::-webkit-slider-thumb]:appearance-none [&::-webkit-slider-thumb]:rounded-b-[4px] [&::-webkit-slider-thumb]:border [&::-webkit-slider-thumb]:border-[#777] [&::-webkit-slider-thumb]:bg-[#f7f7f8]"
        />
        <RoundButton label="Acercar" d="M3.500 6.500h6M6.500 3.500v6" />
      </div>
    </div>
  );
}

function TaskButton({
  icon,
  label,
  tone,
  children,
}: {
  icon: ReactNode;
  label: string;
  tone?: "active" | "hover";
  children?: ReactNode;
}) {
  return (
    <div className="relative w-[126px]">
      <button
        className={clsx(
          "flex h-[20px] w-full items-center gap-[3px] rounded-[2px] pl-[8px] text-[9px] whitespace-nowrap",
          !tone && "bg-linear-to-b from-[#5b9bff] via-[#3b7df0] to-[#3674e4] text-white",
          tone === "active" && "bg-[#1b4fb5] text-white",
          tone === "hover" && "bg-linear-to-b from-[#6cadff] to-[#539bfa] text-[#d5e5ff]",
        )}
      >
        {icon}
        {label}
      </button>
      {children}
    </div>
  );
}

function Taskbar() {
  return (
    <footer className="flex h-[24px] shrink-0 items-center bg-linear-to-b from-[#3f8cf3] via-[#245edb] via-20% to-[#1d4fc0] text-white">
      <button
        className={clsx(
          "flex h-full w-[81px] items-center gap-[4px] rounded-r-[8px] bg-linear-to-b from-[#62b862] via-[#389538] via-25% to-[#2f8030] pl-[8px] text-[14px] font-bold italic",
          ARIAL,
        )}
      >
        <svg viewBox="0 0 16 14" className="h-[14px] w-[15px]">
          <path d="M2.500 1.500C4.500.5 6 .8 7.500 1.700L6.500 6.500C5 5.500 3.300 5.500 1.500 6.300z" fill="#e8552c" />
          <path d="M8.500 2.200C10.500 3.200 12 3 14.500 2L13.500 6.800C11.500 7.700 9.500 7.700 7.500 6.900z" fill="#7ccb3c" />
          <path d="M1.300 7.400C3 6.600 4.800 6.500 6.300 7.500L5.300 12.200C3.800 11.300 2 11.400.3 12.200z" fill="#4c90ee" />
          <path d="M7.300 8C9 8.900 11 8.800 13.200 7.900L12.200 12.500C10 13.500 8 13.500 6.300 12.600z" fill="#fbd040" />
        </svg>
        Inicio
      </button>
      <div className="flex w-[82px] items-center gap-[5px] pl-[11px]">
        <button aria-label="Chrome"><ChromeIcon /></button>
        <button aria-label="Correo">
          <svg viewBox="0 0 13 13" className="size-[13px]">
            <path d="M2 1h8l2 2-1 9H2z" fill="#e8f2fb" />
            <path d="M9.500 5C8 2.500 3.500 3.500 3.500 7s4.500 4 6 1.500M4 7h5.500c0-3-5-3.500-5.500 0z" fill="none" stroke="#3b8fd0" strokeWidth="1.500" />
          </svg>
        </button>
        <button aria-label="Messenger"><MessengerIcon /></button>
        <span className="ml-[3px] self-start text-[9px] leading-[9px]">»</span>
      </div>
      <div className="flex gap-[2px]">
        <TaskButton icon={<MessengerIcon />} label="Windows Live Messen..." />
        <TaskButton icon={<ChromeIcon />} label="ImageShack® - Onlin..." />
        <TaskButton
          label="P90"
          icon={
            <svg viewBox="0 0 13 11" className="h-[10px] w-[12px]">
              <path d="M.5 1.500l1-1h4l1 1.500h5v8H.5z" fill="#e8bd4a" />
              <path d="M.5 10L2 4h10.500l-1 6z" fill="#fbe795" />
            </svg>
          }
        />
        <TaskButton tone="active" icon={<ExcelIcon className="size-[12px] shrink-0" />} label="Microsoft Excel - P90 ..." />
        <TaskButton tone="hover" icon={<PaintIcon />} label="3.JPG - Paint">
          <div
            role="tooltip"
            className="absolute bottom-full left-[30px] mb-px border border-black bg-[#ffffe1] px-px text-[9px] leading-[13px] whitespace-nowrap text-black"
          >
            3.JPG - Paint
          </div>
        </TaskButton>
      </div>
      <div className="ml-auto flex h-full w-[124px] items-center gap-[2px]">
        <button aria-label="Mostrar iconos ocultos" className="z-10 size-[12px] rounded-full border border-[#8fd0ff] bg-[#2b84dd]">
          <svg viewBox="0 0 8 8" className="mx-auto size-[8px]" fill="none" stroke="#fff" strokeWidth="1.500">
            <path d="M5 1.500L2.500 4 5 6.500" />
          </svg>
        </button>
        <div className="-ml-[8px] flex h-full flex-1 items-center gap-[2px] border-l border-[#0d5bb0] bg-linear-to-b from-[#3fb4f5] via-[#1291e8] via-20% to-[#0f7fd2] pl-[8px]">
          <svg viewBox="0 0 13 13" className="size-[13px]">
            <circle cx="6.500" cy="6.500" r="6" fill="#f2edf6" />
            <path d="M10 6.500c0-5-7.500-4-7 .5.500 4 6 3.500 6-.5 0-2.500-3.500-2-3.300 0" fill="none" stroke="#6a3a90" strokeWidth="1.500" />
          </svg>
          <svg viewBox="0 0 13 13" className="size-[13px]">
            <rect width="13" height="13" rx="3" fill="#f5e7b8" />
            <circle cx="6.500" cy="6.500" r="4.500" fill="#ee9a22" />
            <circle cx="6.500" cy="6.500" r="2" fill="#fff3d0" />
          </svg>
          <svg viewBox="0 0 12 13" className="h-[13px] w-[12px]">
            <circle cx="5" cy="3" r="2.200" fill="#cfe9fa" />
            <path d="M1 12c0-4 1.500-6 4-6s3.500 2 4 6z" fill="#a3d6f2" />
            <path d="M6 7h5.500v5.500H6z" fill="#4fc23a" />
          </svg>
          <svg viewBox="0 0 13 13" className="size-[12px]">
            <path d="M6.500 1L12 2.500c0 5-1.500 8-5.500 10-4-2-5.500-5-5.500-10z" fill="#cf2234" stroke="#e8b2b8" strokeWidth=".8" />
            <path d="M3.500 3.500l2 5.500 1-3 1 3 2-5.500" fill="none" stroke="#fff" />
          </svg>
          <svg viewBox="0 0 13 13" className="size-[12px]">
            <path d="M1 1h6v5H1zM5.500 5h6.500v6H5.500z" fill="#7a88a8" stroke="#c2cbe0" strokeWidth=".8" />
            <circle cx="7" cy="7" r="3.200" fill="none" stroke="#e0392c" strokeWidth="1.300" />
            <path d="M5 5l4 4" stroke="#e0392c" strokeWidth="1.300" />
          </svg>
          <time className="ml-[5px] text-[9px]">14:09</time>
        </div>
      </div>
    </footer>
  );
}

export default function App() {
  return (
    <div className={clsx("flex h-screen flex-col overflow-hidden bg-linear-to-b from-[#edeff1] to-[#e0e3e6]", UI)}>
      <TitleBar />
      <MenuBar />
      <div className="flex h-[69px] shrink-0 overflow-hidden bg-linear-to-b from-white via-[#fafbfc] to-[#e6e9ec]">
        <Clipboard />
        <FontGroup />
        <Alignment />
        <NumberGroup />
        <Styles />
        <Cells />
        <Editing />
      </div>
      <FormulaBar />
      <Worksheet />
      <SheetTabs />
      <StatusBar />
      <Taskbar />
    </div>
  );
}
